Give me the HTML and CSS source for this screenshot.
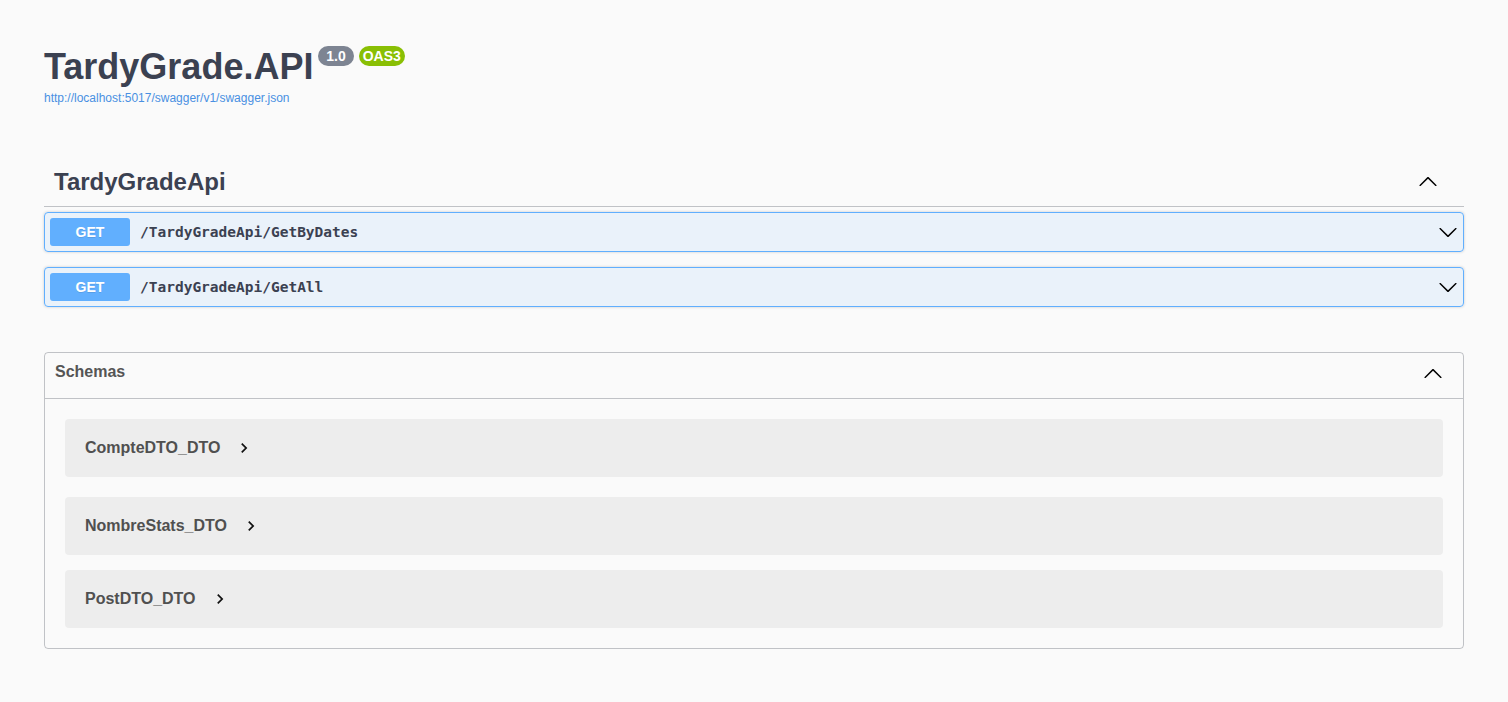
FILE: index.html
```html
<!DOCTYPE html>
<html lang="en">
<head>
<meta charset="utf-8">
<title>Swagger UI</title>
<link rel="stylesheet" href="styles.css">
</head>
<body>
<div class="wrapper">
  <div class="info">
    <h2 class="title">TardyGrade.API<small class="badge badge-version"><span> 1.0 </span></small><small class="badge badge-oas"><span>OAS3</span></small></h2>
    <a class="spec-link" href="#">http://localhost:5017/swagger/v1/swagger.json</a>
  </div>

  <div class="tag-section">
    <h3 class="tag-header">
      <span class="tag-name">TardyGradeApi</span>
      <span class="tag-toggle">
        <svg class="arrow" width="20" height="20" viewBox="0 0 20 20"><path d="M17.418 14.908c.272.268.709.268.979 0s.271-.701 0-.969l-7.908-7.830c-.27-.268-.707-.268-.979 0l-7.908 7.830c-.27.268-.27.701 0 .969.271.268.709.268.979 0L10 7.767l7.418 7.141z"/></svg>
      </span>
    </h3>
    <div class="opblock">
      <div class="opblock-summary">
        <span class="method">GET</span>
        <span class="path">/TardyGradeApi/GetByDates</span>
        <svg class="arrow" width="20" height="20" viewBox="0 0 20 20"><path d="M17.418 6.109c.272-.268.709-.268.979 0s.271.701 0 .969l-7.908 7.830c-.27.268-.707.268-.979 0l-7.908-7.830c-.27-.268-.27-.701 0-.969.271-.268.709-.268.979 0L10 13.25l7.418-7.141z"/></svg>
      </div>
    </div>
    <div class="opblock">
      <div class="opblock-summary">
        <span class="method">GET</span>
        <span class="path">/TardyGradeApi/GetAll</span>
        <svg class="arrow" width="20" height="20" viewBox="0 0 20 20"><path d="M17.418 6.109c.272-.268.709-.268.979 0s.271.701 0 .969l-7.908 7.830c-.27.268-.707.268-.979 0l-7.908-7.830c-.27-.268-.27-.701 0-.969.271-.268.709-.268.979 0L10 13.25l7.418-7.141z"/></svg>
      </div>
    </div>
  </div>

  <section class="models">
    <h4 class="models-header">
      <span class="models-title">Schemas</span>
      <svg class="arrow" width="20" height="20" viewBox="0 0 20 20"><path d="M17.418 14.908c.272.268.709.268.979 0s.271-.701 0-.969l-7.908-7.830c-.27-.268-.707-.268-.979 0l-7.908 7.830c-.27.268-.27.701 0 .969.271.268.709.268.979 0L10 7.767l7.418 7.141z"/></svg>
    </h4>
    <div class="model-list">
      <div class="model-container first">
        <span class="model-title">CompteDTO_DTO</span>
        <svg class="chevron" width="20" height="20" viewBox="0 0 24 24"><path d="M10 6 8.59 7.41 13.17 12l-4.58 4.59L10 18l6-6z"/></svg>
      </div>
      <div class="model-container">
        <span class="model-title">NombreStats_DTO</span>
        <svg class="chevron" width="20" height="20" viewBox="0 0 24 24"><path d="M10 6 8.59 7.41 13.17 12l-4.58 4.59L10 18l6-6z"/></svg>
      </div>
      <div class="model-container last">
        <span class="model-title">PostDTO_DTO</span>
        <svg class="chevron" width="20" height="20" viewBox="0 0 24 24"><path d="M10 6 8.59 7.41 13.17 12l-4.58 4.59L10 18l6-6z"/></svg>
      </div>
    </div>
  </section>
</div>
</body>
</html>
```

FILE: styles.css
```css
html, body {
  margin: 0;
  padding: 0;
  background: #fafafa;
}

body {
  font-family: "Liberation Sans", Arial, sans-serif;
  color: #3b4151;
}

.wrapper {
  max-width: 1460px;
  margin: 0 auto;
  padding: 0 20px;
  box-sizing: border-box;
}

/* ---------- info ---------- */
.info {
  padding-top: 46px;
  margin-bottom: 52px;
}

.title {
  display: flex;
  align-items: flex-start;
  margin: 0;
  font-size: 36px;
  font-weight: 700;
  color: #3b4151;
  line-height: normal;
}

.badge {
  display: inline-block;
  margin-left: 5px;
  padding: 2px 4px;
  border-radius: 57px;
  font-size: 14px;
  font-weight: 700;
  line-height: 16px;
  color: #fff;
  white-space: pre;
}

.badge-version {
  background: #7d8492;
}

.badge-oas {
  background: #89bf04;
}

.spec-link {
  display: block;
  margin-top: 3px;
  font-size: 12px;
  color: #4990e2;
  text-decoration: none;
}

/* ---------- tag ---------- */
.tag-header {
  display: flex;
  align-items: center;
  margin: 0 0 5px;
  padding: 10px 20px 10px 10px;
  border-bottom: 1px solid rgba(59, 65, 81, .3);
  font-size: 24px;
  font-weight: 700;
  line-height: 29px;
  color: #3b4151;
}

.tag-name {
  flex: 1;
}

.tag-toggle {
  display: flex;
  margin-right: 6px;
  margin-top: -2px;
}

.opblock {
  margin: 0 0 15px;
  border: 1px solid #61affe;
  border-radius: 4px;
  background: rgba(97, 175, 254, .1);
  box-shadow: 0 0 3px rgba(0, 0, 0, .19);
}

.opblock-summary {
  display: flex;
  align-items: center;
  padding: 5px;
}

.method {
  min-width: 80px;
  padding: 6px 0;
  border-radius: 3px;
  background: #61affe;
  color: #fff;
  font-size: 14px;
  font-weight: 700;
  line-height: 16px;
  text-align: center;
  text-shadow: 0 1px 0 rgba(0, 0, 0, .1);
}

.path {
  flex: 1;
  padding: 0 10px;
  font-family: "DejaVu Sans Mono", monospace;
  font-size: 14.5px;
  font-weight: 700;
  color: #3b4151;
}

.arrow {
  display: block;
  flex: none;
  fill: #000;
}

/* ---------- models ---------- */
.models {
  margin: 45px 0 30px;
  border: 1px solid rgba(59, 65, 81, .3);
  border-radius: 4px;
}

.models-header {
  display: flex;
  align-items: flex-start;
  margin: 0;
  padding: 10px 20px 15px 10px;
  border-bottom: 1px solid rgba(59, 65, 81, .3);
  font-size: 16px;
  font-weight: 700;
  color: #555;
}

.models-title {
  flex: 1;
  line-height: 18px;
}

.model-list {
  display: flex;
  flex-direction: column;
  gap: 15px;
  padding: 20px;
}

.model-container {
  display: flex;
  align-items: center;
  padding: 19px 20px;
  border-radius: 4px;
  background: rgba(0, 0, 0, .05);
}

.model-container.first {
  margin-bottom: 5px;
}

.model-title {
  font-size: 16px;
  font-weight: 700;
  line-height: 18px;
  color: #505050;
}

.chevron {
  display: block;
  margin-left: 14px;
  fill: #111;
}
```
